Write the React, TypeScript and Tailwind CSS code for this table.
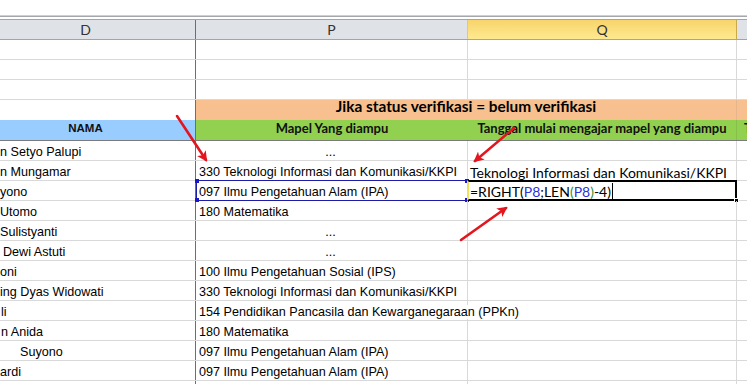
import React from "react";

type Row = {
  d: string;
  dl: number;
  p?: string;
  center?: boolean;
  q?: string;
  sel?: boolean;
};

const rows: Row[] = [
  { d: "n Setyo Palupi", dl: 0, p: "...", center: true },
  { d: "n Mungamar", dl: 0, p: "330 Teknologi Informasi dan Komunikasi/KKPI", q: "Teknologi Informasi dan Komunikasi/KKPI" },
  { d: "yono", dl: 0, p: "097 Ilmu Pengetahuan Alam (IPA)", sel: true },
  { d: "Utomo", dl: 0, p: "180 Matematika" },
  { d: "Sulistyanti", dl: 0, p: "...", center: true },
  { d: "Dewi Astuti", dl: 3, p: "...", center: true },
  { d: "oni", dl: 0, p: "100 Ilmu Pengetahuan Sosial (IPS)" },
  { d: "ing Dyas Widowati", dl: 0, p: "330 Teknologi Informasi dan Komunikasi/KKPI" },
  { d: "li", dl: 1, p: "154 Pendidikan Pancasila dan Kewarganegaraan (PPKn)" },
  { d: "n Anida", dl: 1, p: "180 Matematika" },
  { d: "Suyono", dl: 20, p: "097 Ilmu Pengetahuan Alam (IPA)" },
  { d: "ardi", dl: 0, p: "097 Ilmu Pengetahuan Alam (IPA)" },
  { d: "", dl: 0 },
];

const arial = "font-['Liberation_Sans',Arial,sans-serif] text-[12.6px] text-black";
const calibri = "font-['Lato',sans-serif]";

function Handle({ className }: { className: string }) {
  return <div className={`absolute w-[4px] h-[4px] bg-[#1818c8] ${className}`} />;
}

function FormulaText() {
  return (
    <span className={`${calibri} text-[14px] text-black`}>
      =RIGHT(<span className="text-[#3232d8]">P8</span>;LEN
      <span className="text-[#2f8f2f]">(</span>
      <span className="text-[#3232d8]">P8</span>
      <span className="text-[#2f8f2f]">)</span>-4)
    </span>
  );
}

function EmptyRow() {
  return (
    <div className="flex h-[20px] border-b border-[#d9d9d9]">
      <div className="w-[196px] border-r border-[#6e6e6e]" />
      <div className="w-[272px] border-r border-[#d9d9d9]" />
      <div className="w-[269px] border-r border-[#d9d9d9]" />
      <div className="flex-1" />
    </div>
  );
}

export default function App() {
  return (
    <div className="relative w-[747px] h-[384px] overflow-hidden bg-white">
      <div className="h-[15px]" />
      <div className="h-px bg-[#cdd0d4]" />
      <div className="h-px bg-[#a4a8ad]" />
      <div className="h-[2px]" />

      {/* column letters */}
      <div className={`flex h-[21px] border-y border-[#9ea5ae] bg-[#dfe3e8] text-[14px] text-[#333] ${calibri}`}>
        <div className="w-[196px] border-r border-[#6e6e6e] flex items-center justify-center pr-[24px]">D</div>
        <div className="w-[272px] border-r border-[#c3c8ce] flex items-center justify-center">P</div>
        <div className="w-[269px] border-r border-[#c9a94a] flex items-center justify-center bg-gradient-to-b from-[#f8d46c] to-[#fee98f]">
          Q
        </div>
        <div className="flex-1" />
      </div>

      <EmptyRow />
      <EmptyRow />
      <EmptyRow />

      {/* merged title */}
      <div className="flex h-[20px]">
        <div className="w-[196px] border-r border-[#6e6e6e]" />
        <div className={`w-[541px] border-r border-[#e6b58a] bg-[#f9c08f] flex items-end justify-center pb-[2px] text-[15.4px] font-bold text-black ${calibri}`}>
          Jika status verifikasi = belum verifikasi
        </div>
        <div className="flex-1 bg-[#f9c08f]" />
      </div>

      {/* column titles */}
      <div className="flex h-[21px] border-b border-[#7a7a7a]">
        <div className="w-[196px] border-r border-[#6e6e6e] bg-[#99ccff] flex items-end justify-center pr-[24px] pb-[3px] font-['Liberation_Sans',Arial,sans-serif] text-[11.5px] font-bold text-[#111]">
          NAMA
        </div>
        <div className={`w-[272px] bg-[#92d050] flex items-end justify-center pb-[2px] text-[13px] font-bold text-[#111] ${calibri}`}>
          Mapel Yang diampu
        </div>
        <div className={`w-[269px] border-r border-[#86bf49] bg-[#92d050] flex items-end justify-center pb-[2px] text-[13px] font-bold text-[#111] whitespace-nowrap ${calibri}`}>
          Tanggal mulai mengajar mapel yang diampu
        </div>
        <div className={`flex-1 bg-[#92d050] pl-[7px] flex items-end pb-[2px] text-[13px] font-bold text-[#111] overflow-hidden ${calibri}`}>
          T
        </div>
      </div>

      {/* data */}
      {rows.map((r, i) => (
        <div key={i} className="flex h-[20px] border-b border-[#d9d9d9]">
          <div className={`w-[196px] border-r border-[#6e6e6e] overflow-hidden whitespace-nowrap leading-[19px] pt-[2px] ${arial}`}>
            <span style={{ paddingLeft: r.dl }}>{r.d}</span>
          </div>
          <div
            className={`relative w-[272px] border-r border-[#d9d9d9] whitespace-nowrap leading-[19px] pt-[2px] ${arial} ${
              r.center ? "text-center" : "pl-[3px]"
            }`}
          >
            {r.p && <span className="relative z-10 bg-white pr-[2px]">{r.p}</span>}
            {r.sel && (
              <div className="absolute left-0 right-[-1px] top-[-1px] bottom-[-1px] border border-[#1c1ca8]">
                <Handle className="left-[-2px] top-[-2px]" />
                <Handle className="left-[-2px] bottom-[-2px]" />
                <Handle className="right-[-2px] top-[-2px]" />
                <Handle className="right-[-2px] bottom-[-2px]" />
              </div>
            )}
          </div>
          <div className={`relative w-[269px] border-r border-[#d9d9d9] pl-[2px] whitespace-nowrap leading-[19px] pt-[1px] ${calibri}`}>
            {r.q && <span className="text-[14px] text-black">{r.q}</span>}
            {r.sel && (
              <>
                <div className="absolute left-[-1px] right-[-1px] top-[-1px] bottom-[-1px] border-2 border-black border-l-[#f2e05a]" />
                <div className="absolute left-[2px] top-[1px] flex items-center">
                  <FormulaText />
                  <div className="ml-[1px] w-px h-[17px] bg-black" />
                </div>
                <div className="absolute right-[-3px] bottom-[-3px] w-[5px] h-[5px] bg-black border border-white" />
              </>
            )}
          </div>
          <div className="flex-1" />
        </div>
      ))}

      {/* red arrows */}
      <svg className="absolute inset-0 pointer-events-none" width="747" height="384">
        <defs>
          <marker id="head" viewBox="0 0 10 10" refX="8" refY="5" markerWidth="4" markerHeight="4" orient="auto">
            <path d="M0 0 L10 5 L0 10 L2.5 5 Z" fill="#e3161f" />
          </marker>
        </defs>
        <g stroke="#e3161f" strokeWidth="2.6" strokeLinecap="round" markerEnd="url(#head)">
          <line x1="177" y1="116" x2="206" y2="160" />
          <line x1="514" y1="128" x2="475" y2="161" />
          <line x1="461" y1="240" x2="506" y2="208" />
        </g>
      </svg>
    </div>
  );
}
